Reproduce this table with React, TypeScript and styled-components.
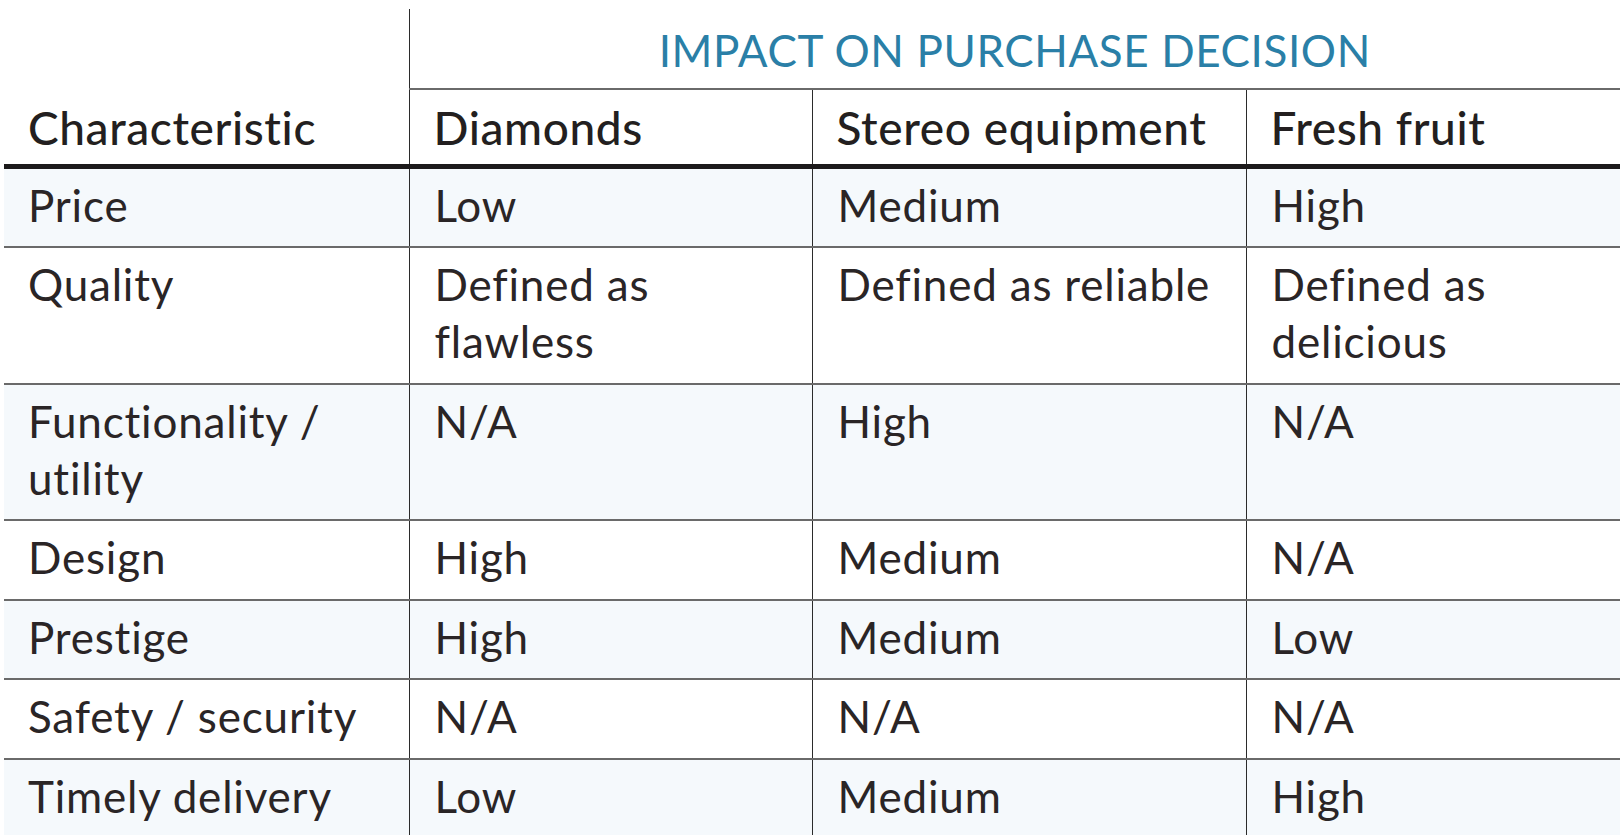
import React from "react";
import styled, { createGlobalStyle } from "styled-components";

const Global = createGlobalStyle`
  html, body { margin: 0; padding: 0; background: #ffffff; }
  body { font-family: Lato, "Open Sans", sans-serif; color: #231f20; }
`;

const Page = styled.div`
  padding: 9px 0 0 4px;
`;

const Table = styled.table`
  width: 1616px;
  border-collapse: collapse;
  table-layout: fixed;
  font-family: Lato, "Open Sans", sans-serif;
`;

const HeadRow = styled.tr<{ $h: number }>`
  height: ${(p) => p.$h}px;
`;

const GroupHead = styled.th`
  padding: 2px 0 0 0;
  text-align: center;
  font-size: 44px;
  font-weight: 400;
  color: #2a7fa7;
  letter-spacing: 0.6px;
  border-bottom: 2px solid #6a6a6a;
  vertical-align: middle;
`;

const ColHead = styled.th<{ $first?: boolean }>`
  text-align: left;
  vertical-align: bottom;
  font-size: 46px;
  font-weight: 500;
  letter-spacing: 0.6px;
  color: #231f20;
  padding: 0 10px 8px 24px;
  line-height: 57px;
  border-bottom: 5px solid #1c1a1b;
  border-right: ${(p) => (p.$first ? "1.5px solid #2b2b2b" : "none")};
  & + & {
    border-left: 1.5px solid #2b2b2b;
  }
`;

const Row = styled.tr<{ $shade: boolean }>`
  background: ${(p) => (p.$shade ? "#f5f9fc" : "#ffffff")};
`;

const Cell = styled.td`
  vertical-align: top;
  font-size: 44px;
  font-weight: 400;
  letter-spacing: 0.8px;
  color: #2a2526;
  line-height: 57px;
  padding: 8px 10px 12.5px 25px;
  border-bottom: 2px solid #6a6a6a;
  border-left: 1.5px solid #2b2b2b;
  &:first-child { border-left: none; padding-left: 24px; }
`;

const rows: string[][] = [
  ["Price", "Low", "Medium", "High"],
  ["Quality", "Defined as flawless", "Defined as reliable", "Defined as delicious"],
  ["Functionality / utility", "N/A", "High", "N/A"],
  ["Design", "High", "Medium", "N/A"],
  ["Prestige", "High", "Medium", "Low"],
  ["Safety / security", "N/A", "N/A", "N/A"],
  ["Timely delivery", "Low", "Medium", "High"],
];

export default function App() {
  return (
    <>
      <Global />
      <Page>
        <Table>
          <colgroup>
            <col style={{ width: 405 }} />
            <col style={{ width: 403 }} />
            <col style={{ width: 434 }} />
            <col style={{ width: 374 }} />
          </colgroup>
          <thead>
            <HeadRow $h={80}>
              <ColHead $first rowSpan={2}>Characteristic</ColHead>
              <GroupHead colSpan={3}>IMPACT ON PURCHASE DECISION</GroupHead>
            </HeadRow>
            <HeadRow $h={77}>
              <ColHead>Diamonds</ColHead>
              <ColHead>Stereo equipment</ColHead>
              <ColHead>Fresh fruit</ColHead>
            </HeadRow>
          </thead>
          <tbody>
            {rows.map((r, i) => (
              <Row key={r[0]} $shade={i % 2 === 0}>
                {r.map((c) => (
                  <Cell key={c}>{c}</Cell>
                ))}
              </Row>
            ))}
          </tbody>
        </Table>
      </Page>
    </>
  );
}
